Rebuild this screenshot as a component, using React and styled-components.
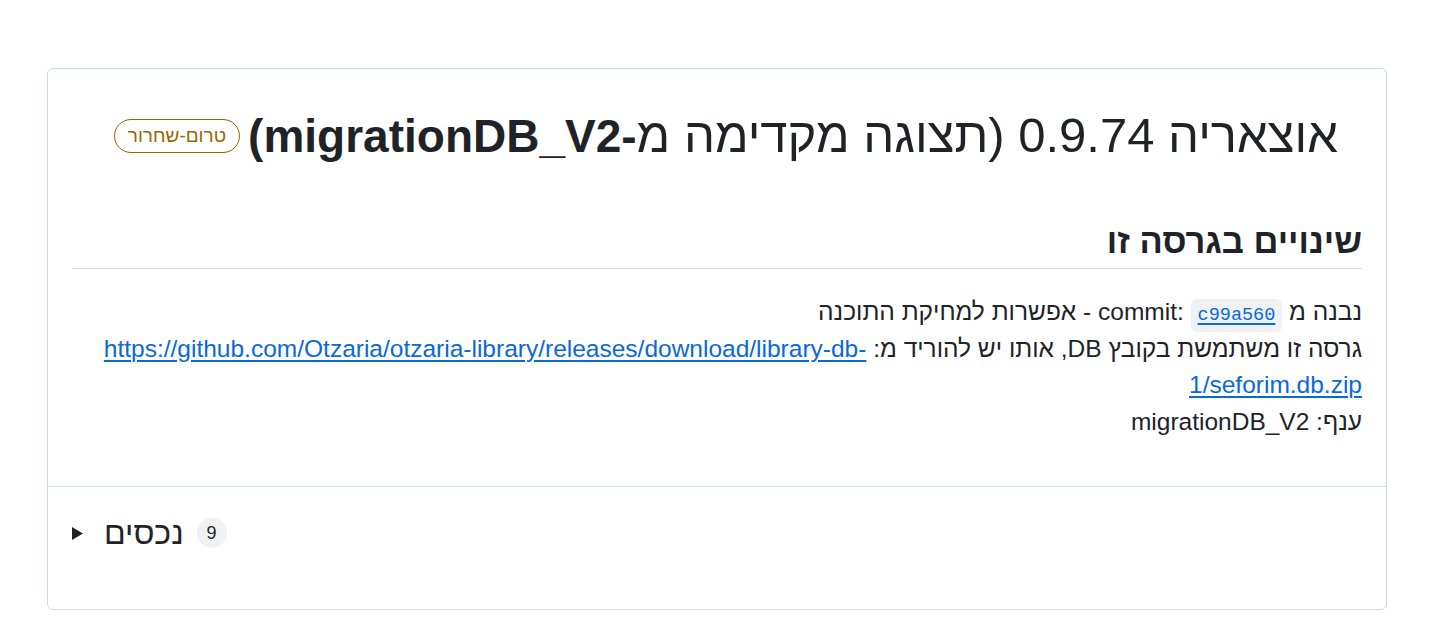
import React from "react";
import styled, { createGlobalStyle } from "styled-components";

const GlobalStyle = createGlobalStyle`
  body {
    margin: 0;
    background: #ffffff;
    font-family: "Liberation Sans", "DejaVu Sans", sans-serif;
    color: #1f2328;
  }
`;

const Page = styled.div`
  padding: 68px 0 0 47px;
`;

const Card = styled.section`
  width: 1340px;
  box-sizing: border-box;
  border: 1px solid #d1d9e0;
  border-radius: 6px;
  direction: rtl;
`;

const Body = styled.div`
  padding: 24px;
`;

const TitleRow = styled.div`
  display: flex;
  align-items: center;
  gap: 8px;
  margin: 12px 24px 0 0;
`;

const Title = styled.h1`
  margin: 0;
  font-size: 49px;
  line-height: 60px;
  font-weight: 400;
  color: #1f2328;
`;

const Strong = styled.span`
  font-weight: 700;
  font-size: 46px;
`;

const Badge = styled.span`
  display: inline-flex;
  align-items: center;
  height: 34px;
  box-sizing: border-box;
  padding: 0 13px;
  border: 1px solid #9a6700;
  border-radius: 999px;
  color: #9a6700;
  font-size: 19px;
`;

const Heading = styled.h2`
  margin: 53px 0 0;
  padding-bottom: 5px;
  font-size: 34.5px;
  line-height: 44px;
  font-weight: 700;
  border-bottom: 1px solid #d8dee4;
`;

const Text = styled.p`
  margin: 25px 0 22px;
  font-size: 24.5px;
  line-height: 36.5px;
`;

const Link = styled.a`
  color: #0969da;
  text-decoration: underline;
  text-decoration-thickness: 1.5px;
  text-underline-offset: 3px;
  direction: ltr;
  unicode-bidi: ${(p) => (p.$isolate ? "isolate" : "normal")};
`;

const Code = styled.code`
  padding: 6px 7px;
  line-height: 1;
  border-radius: 6px;
  background: #eff1f3;
  font-family: "Liberation Mono", "DejaVu Sans Mono", monospace;
  font-size: 18.5px;
`;

const Footer = styled.div`
  border-top: 1px solid #d1d9e0;
  padding: 31px 24px 61px;
`;

const Summary = styled.div`
  direction: ltr;
  display: flex;
  align-items: center;
  gap: 21px;
`;

const AssetsTitle = styled.h3`
  margin: 0;
  font-size: 32px;
  line-height: 30px;
  font-weight: 400;
  display: flex;
  align-items: center;
  gap: 13px;
`;

const Counter = styled.span`
  display: inline-flex;
  align-items: center;
  justify-content: center;
  min-width: 30px;
  height: 30px;
  border-radius: 999px;
  background: #eff1f3;
  font-size: 18px;
`;

const Caret = () => (
  <svg width="11" height="13" viewBox="0 0 11 13" aria-hidden="true">
    <path d="M0 0 L11 6.5 L0 13 Z" fill="#1f2328" />
  </svg>
);

export default function App() {
  return (
    <Page>
      <GlobalStyle />
      <Card>
        <Body>
          <TitleRow>
            <Title>
              אוצאריה 0.9.74 (תצוגה מקדימה מ<Strong>-migrationDB_V2)</Strong>
            </Title>
            <Badge>טרום-שחרור</Badge>
          </TitleRow>
          <Heading>שינויים בגרסה זו</Heading>
          <Text>
            נבנה מ commit:{" "}
            <Link href="#">
              <Code>c99a560</Code>
            </Link>{" "}
            - אפשרות למחיקת התוכנה
            <br />
            גרסה זו משתמשת בקובץ DB, אותו יש להוריד מ:{" "}
            <Link href="#" $isolate>
              https://github.com/Otzaria/otzaria-library/releases/download/library-db-
              <br />
              1/seforim.db.zip
            </Link>
            <br />
            ענף: migrationDB_V2
          </Text>
        </Body>
        <Footer>
          <Summary>
            <Caret />
            <AssetsTitle>
              נכסים
              <Counter>9</Counter>
            </AssetsTitle>
          </Summary>
        </Footer>
      </Card>
    </Page>
  );
}
